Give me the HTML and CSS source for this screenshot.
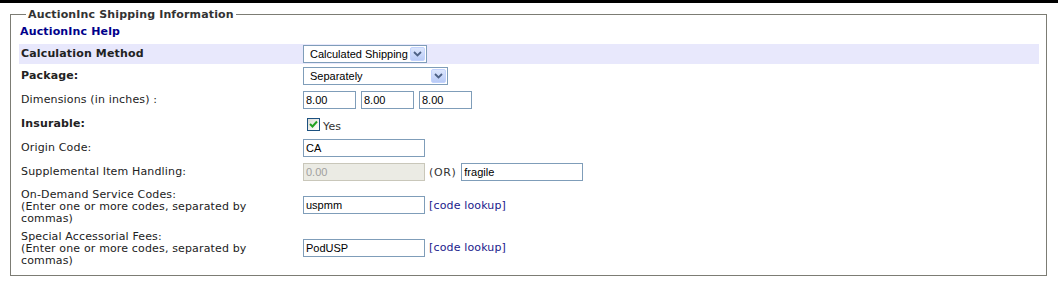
FILE: index.html
```html
<!DOCTYPE html>
<html lang="en">
<head>
    <meta charset="UTF-8">
    <meta name="viewport" content="width=device-width, initial-scale=1.0">
    <title>AuctionInc Shipping Information</title>
    <link rel="stylesheet" href="styles.css">
</head>
<body>
    <div class="topbar"></div>
    <main>
        <fieldset class="box">
            <legend>AuctionInc Shipping Information</legend>
            <a class="help" href="#">AuctionInc Help</a>
            <div class="form">
                <div class="row shade">
                    <label class="strong">Calculation Method</label>
                    <div class="field">
                        <span class="select w1">Calculated Shipping
                            <span class="drop"><svg width="9" height="6" viewBox="0 0 9 6"><path d="M1 1 L4.5 4.5 L8 1" fill="none" stroke="#4d6185" stroke-width="1.8"/></svg></span>
                        </span>
                    </div>
                </div>
                <div class="row">
                    <label class="strong">Package:</label>
                    <div class="field">
                        <span class="select w2">Separately
                            <span class="drop"><svg width="9" height="6" viewBox="0 0 9 6"><path d="M1 1 L4.5 4.5 L8 1" fill="none" stroke="#4d6185" stroke-width="1.8"/></svg></span>
                        </span>
                    </div>
                </div>
                <div class="row">
                    <label>Dimensions (in inches) :</label>
                    <div class="field">
                        <input class="text small" value="8.00">
                        <input class="text small" value="8.00">
                        <input class="text small" value="8.00">
                    </div>
                </div>
                <div class="row">
                    <label class="strong">Insurable:</label>
                    <div class="field">
                        <span class="check"><svg width="9" height="8" viewBox="0 0 9 8"><path d="M1 4 L3.5 6.5 L8 1.5" fill="none" stroke="#21a121" stroke-width="2"/></svg></span>
                        <span class="yes">Yes</span>
                    </div>
                </div>
                <div class="row">
                    <label>Origin Code:</label>
                    <div class="field">
                        <input class="text" value="CA">
                    </div>
                </div>
                <div class="row">
                    <label>Supplemental Item Handling:</label>
                    <div class="field">
                        <input class="text" value="0.00" disabled>
                        <span class="or">(OR)</span>
                        <input class="text" value="fragile">
                    </div>
                </div>
                <div class="row tall">
                    <label>On-Demand Service Codes:<br>(Enter one or more codes, separated by<br>commas)</label>
                    <div class="field">
                        <input class="text" value="uspmm">
                        <a class="lookup" href="#">[code lookup]</a>
                    </div>
                </div>
                <div class="row tall">
                    <label>Special Accessorial Fees:<br>(Enter one or more codes, separated by<br>commas)</label>
                    <div class="field">
                        <input class="text" value="PodUSP">
                        <a class="lookup" href="#">[code lookup]</a>
                    </div>
                </div>
            </div>
        </fieldset>
    </main>
</body>
</html>
```

FILE: styles.css
```css
* {
    margin: 0;
    padding: 0;
    box-sizing: border-box;
}
body {
    background-color: white;
    font-family: "DejaVu Sans", Verdana, sans-serif;
    font-size: 11px;
    letter-spacing: 0.15px;
    color: #222;
}
.topbar {
    height: 3px;
    background-color: black;
}
main {
    padding: 5px 11px 0 10px;
}
.box {
    border: 1px solid #7c7c74;
    padding: 0 7px 6px 8px;
    height: 268px;
}
.box legend {
    margin-left: 7px;
    padding: 0 2px;
    font-weight: bold;
    color: #333;
    line-height: 13px;
}
.help {
    display: block;
    margin: 4px 0 0 1px;
    font-weight: bold;
    color: #00008b;
    text-decoration: none;
    line-height: 14px;
}
.form {
    margin-top: 5px;
}
.row {
    display: grid;
    grid-template-columns: 284px 1fr;
    align-items: center;
    height: 24px;
}
.row.shade {
    height: 20px;
    background-color: #e8e8fc;
}
.row.tall {
    height: 42px;
}
.row.tall + .row.tall {
    height: 43px;
}
.row.tall label {
    padding-top: 3px;
}
label {
    padding-left: 2px;
    line-height: 12px;
}
.strong {
    font-weight: bold;
}
.field {
    display: flex;
    align-items: center;
    gap: 5px;
}
.text, .select {
    font-family: "Liberation Sans", Arial, sans-serif;
    font-size: 11px;
    letter-spacing: 0;
    color: black;
    height: 18px;
    width: 122px;
    border: 1px solid #7f9db9;
    background-color: white;
    padding: 0 2px;
    outline: none;
}
.text.small {
    width: 53px;
}
.text:disabled {
    background-color: #ebebe4;
    color: #a0a0a0;
    border-color: #c9c7ba;
}
.select {
    display: flex;
    align-items: center;
    justify-content: space-between;
    padding: 0 1px 0 6px;
}
.select.w1 {
    width: 124px;
}
.select.w2 {
    width: 145px;
}
.drop {
    width: 15px;
    height: 14px;
    border: 1px solid #c3d3fd;
    border-radius: 2px;
    background: linear-gradient(#dce6fd, #b9cbf7);
    display: flex;
    align-items: center;
    justify-content: center;
}
.check {
    width: 13px;
    height: 13px;
    margin-left: 4px;
    border: 1px solid #1c5180;
    background: linear-gradient(135deg, #dcdcd6, #ffffff);
    display: flex;
    align-items: center;
    justify-content: center;
}
.yes {
    margin: 4px 0 0 -2px;
    color: #333;
}
.or {
    color: #333;
    margin: 0 0 0 -1px;
    letter-spacing: 0.6px;
}
.lookup {
    color: #1a1a8c;
    text-decoration: none;
    margin-left: -1px;
}
```
